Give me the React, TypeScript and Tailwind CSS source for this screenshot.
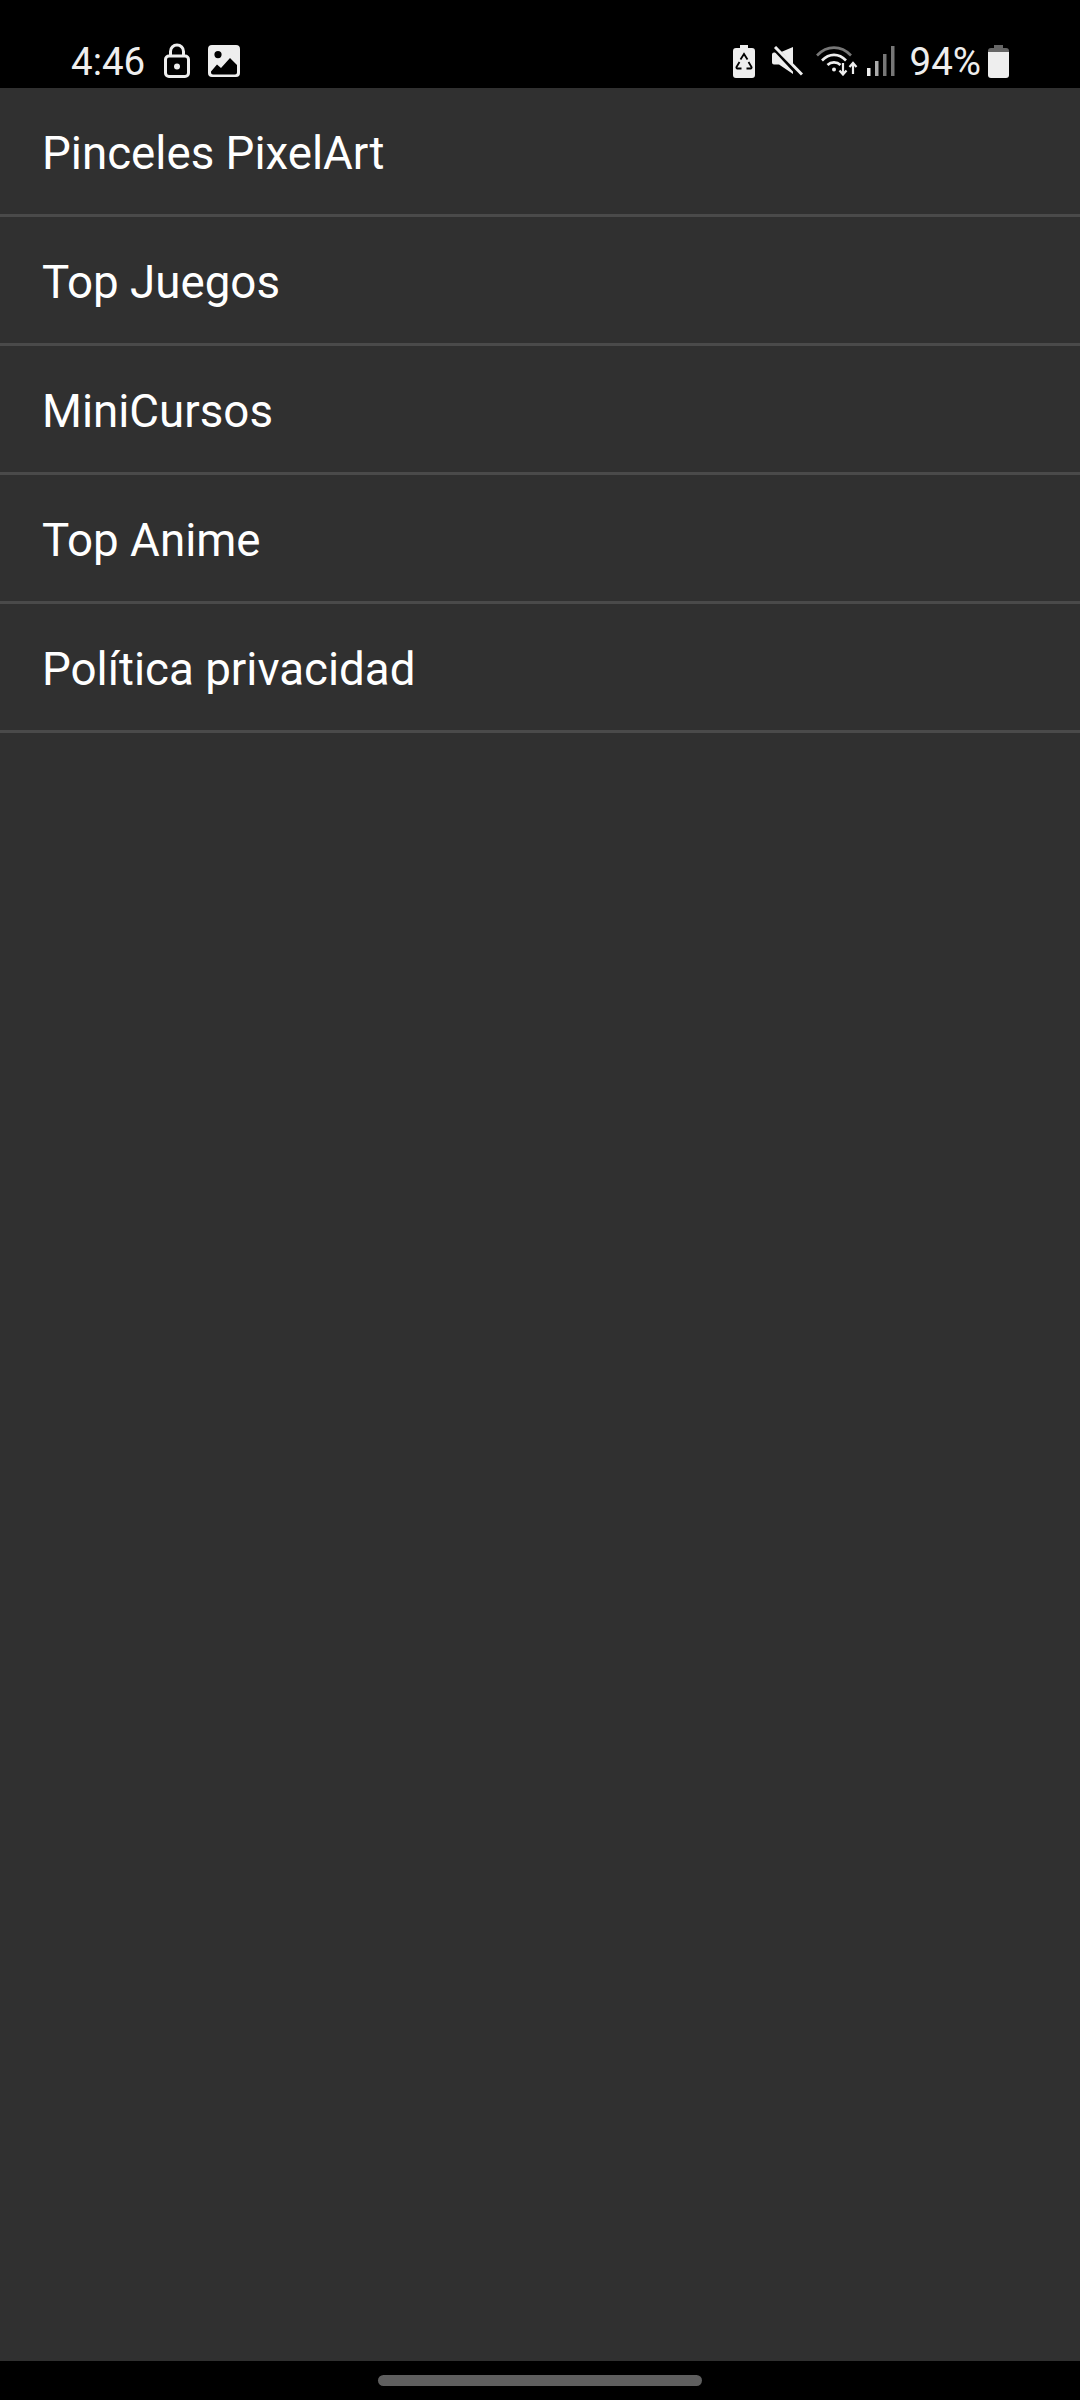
import React from "react";

const items = ["Pinceles PixelArt", "Top Juegos", "MiniCursos", "Top Anime", "Política privacidad"];

const LockIcon = () => (
  <svg width="26" height="35" viewBox="0 0 26 35" className="ml-[19px] mt-[-2px]" fill="none">
    <path d="M6.5 14V8.5a6.5 6.5 0 0 1 13 0V14" stroke="#eeeeee" strokeWidth="3" />
    <rect x="1.5" y="13" width="23" height="20.5" rx="3.5" stroke="#eeeeee" strokeWidth="3" />
    <circle cx="13" cy="23.5" r="3" fill="#eeeeee" />
  </svg>
);

const ImageIcon = () => (
  <svg width="32" height="32" viewBox="0 0 32 32" className="ml-[18px]">
    <path
      fillRule="evenodd"
      fill="#eeeeee"
      d="M4 0h24a4 4 0 0 1 4 4v24a4 4 0 0 1-4 4H4a4 4 0 0 1-4-4V4a4 4 0 0 1 4-4zM10 6a3.6 3.6 0 1 0 0 7.2a3.6 3.6 0 0 0 0-7.2zM3 26.500v1a2 2 0 0 0 2 2h22a2 2 0 0 0 2-2v-7.500l-7-7l-9 10l-4-3.500z"
    />
  </svg>
);

const RecycleBatteryIcon = () => (
  <svg width="22" height="33" viewBox="0 0 22 33" fill="none">
    <path fill="#eeeeee" d="M7 0h8v3h4a3 3 0 0 1 3 3v24a3 3 0 0 1-3 3H3a3 3 0 0 1-3-3V6a3 3 0 0 1 3-3h4z" />
    <path
      d="M7.500 14.500l3.500-5.500l3.500 5.500M15.500 17l3 5a1 1 0 0 1-1 1.500h-4M8.500 23.500H4.500a1 1 0 0 1-1-1.500l3-5"
      stroke="#000000"
      strokeWidth="1.800"
    />
  </svg>
);

const MuteIcon = () => (
  <svg width="31" height="30" viewBox="0 0 31 30" fill="none">
    <path fill="#eeeeee" d="M21 1v27L7 18.500H2a2 2 0 0 1-2-2v-8a2 2 0 0 1 2-2h6L21 1z" />
    <path d="M1 0.500L28.500 30" stroke="#000000" strokeWidth="5" />
    <path d="M3 1l27 27.500" stroke="#eeeeee" strokeWidth="3" />
  </svg>
);

const WifiIcon = () => (
  <svg width="42" height="30" viewBox="0 0 42 30" fill="none">
    <path d="M1 9.500C11 -1 25 -1 35 9.500" stroke="#777777" strokeWidth="2.600" />
    <path d="M6 14.500C13 7 23 7 30 14.500" stroke="#eeeeee" strokeWidth="2.600" />
    <path d="M11.500 19C15 15.500 21 15.500 24.500 19" stroke="#eeeeee" strokeWidth="2.600" />
    <circle cx="18" cy="23.500" r="2" fill="#eeeeee" />
    <path d="M27 17v11M23.500 24.500l3.500 4l3.500-4" stroke="#eeeeee" strokeWidth="2.200" />
    <path d="M37 28V17.500M33.500 21l3.500-4l3.500 4" stroke="#eeeeee" strokeWidth="2.200" />
  </svg>
);

const SignalIcon = () => (
  <svg width="28" height="30" viewBox="0 0 28 30">
    <rect x="0" y="22" width="3.500" height="8" fill="#eeeeee" />
    <rect x="8" y="15" width="3.500" height="15" fill="#aaaaaa" />
    <rect x="16" y="8" width="3.500" height="22" fill="#777777" />
    <rect x="24" y="0" width="3.500" height="30" fill="#777777" />
  </svg>
);

const BatteryIcon = () => (
  <svg width="21" height="33" viewBox="0 0 21 33">
    <path fill="#666666" d="M6 0h9v3h3a3 3 0 0 1 3 3v2H0V6a3 3 0 0 1 3-3h3z" />
    <path fill="#eeeeee" d="M0 7h21v23a3 3 0 0 1-3 3H3a3 3 0 0 1-3-3z" />
  </svg>
);

const StatusBar = () => (
  <div className="flex h-[88px] items-center bg-black pt-[34px] pl-[71px] text-[#eeeeee]">
    <span className="mt-[2px] text-[38.5px] leading-none font-['Roboto',sans-serif]">4:46</span>
    <LockIcon />
    <ImageIcon />
    <div className="ml-auto flex items-center pr-[71px]">
      <RecycleBatteryIcon />
      <div className="ml-[17px]"><MuteIcon /></div>
      <div className="ml-[13px]"><WifiIcon /></div>
      <div className="ml-[9px]"><SignalIcon /></div>
      <span className="mt-[2px] ml-[15px] text-[38.5px] leading-none font-['Roboto',sans-serif]">94%</span>
      <div className="ml-[7px]"><BatteryIcon /></div>
    </div>
  </div>
);

export default function App() {
  return (
    <div className="flex h-[2400px] w-[1080px] flex-col bg-black font-['Roboto',sans-serif]">
      <StatusBar />
      <div className="flex-1 bg-[#303030]">
        {items.map((item) => (
          <div
            key={item}
            className="flex h-[129px] items-center border-b-[3px] border-[#4a4a4a] pl-[42px] pt-[7px] text-[45.7px] text-white"
          >
            {item}
          </div>
        ))}
      </div>
      <div className="flex h-[39px] justify-center bg-black pt-[14px]">
        <div className="h-[11px] w-[324px] rounded-full bg-[#5f5f5f]" />
      </div>
    </div>
  );
}
